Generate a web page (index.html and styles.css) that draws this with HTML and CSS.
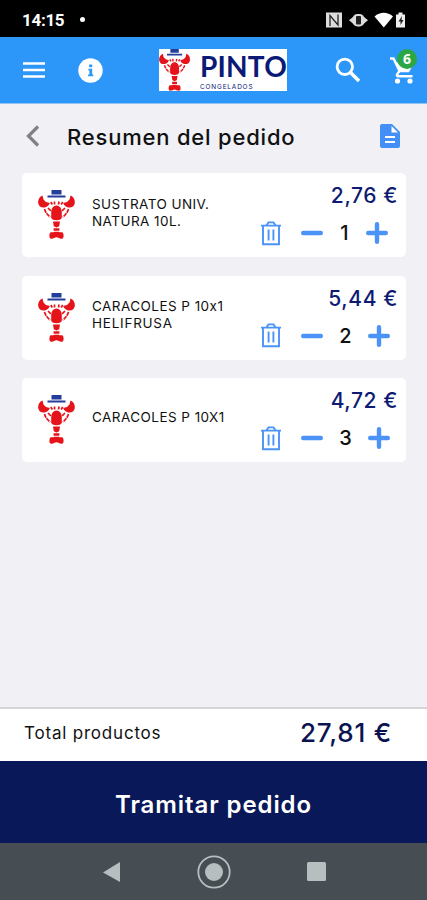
FILE: index.html
```html
<!DOCTYPE html>
<html lang="es">
<head>
    <meta charset="UTF-8">
    <meta name="viewport" content="width=device-width, initial-scale=1.0">
    <title>Resumen del pedido</title>
    <link rel="stylesheet" href="styles.css">
</head>
<body>
    <!-- Shared icons -->
    <svg class="sprite" aria-hidden="true">
        <symbol id="lobster" viewBox="0 0 38 49">
            <path fill="#233d9c" d="M13.5 0h10v4.5h-10zM9.500 5.600h18v2h-18z"/>
            <g fill="#e5141b">
                <path d="M4.500 5.500C1.500 6.500-.2 10 .2 13c.6 3.800 3.500 5 6.600 4.400 2.600-.5 4.400-2.200 5-4.400L8 12 5.500 9.500z"/>
                <path d="M32.500 5.500c3 1 4.700 4.500 4.300 7.500-.6 3.800-3.500 5-6.600 4.400-2.600-.5-4.400-2.200-5-4.400l3.800-1 2.500-2.500z"/>
                <path d="M18.500 15.500c3.200 0 5.300 3 5.300 7v5c0 1.500-2.200 2.800-5.300 2.800s-5.300-1.300-5.300-2.800v-5c0-4 2.100-7 5.300-7z"/>
                <path d="M15 31.500h7l-.8 4.700-2.700 1.300-2.700-1.300zM15.600 38.200h5.800v2.600h-5.800z"/>
                <path d="M12.200 42.500c-1.200 2-1 5.500.3 6 2.500.8 4-1.300 6-1.300s3.500 2.100 6 1.300c1.300-.5 1.500-4 .3-6-2-.8-3.300.3-4.300-.7h-4c-1 1-2.300-.1-4.300.7z"/>
            </g>
            <path fill="none" stroke="#e5141b" stroke-width="1.700" stroke-dasharray="4 .8" d="M6.500 19c1 3.500 3 6 5.800 8M30.500 19c-1 3.500-3 6-5.800 8M10 18l3 3M27 18l-3 3M16.500 11.500v3M21 11.500l-.5 3M12.800 12l1.500 2.500M24.700 12l-1.500 2.500"/>
        </symbol>
        <symbol id="trash" viewBox="0 0 20 25">
            <path fill="none" stroke="currentColor" stroke-width="1.900" d="M0 4.600h20M2 4.600v18.600h16V4.600M5.500 4.300 7.500 1.400h5l2 2.900M7.600 8.500v11M12.400 8.500v11"/>
        </symbol>
        <symbol id="minus" viewBox="0 0 22 22">
            <path fill="none" stroke="currentColor" stroke-width="4.400" stroke-linecap="round" d="M2.200 11h17.600"/>
        </symbol>
        <symbol id="plus" viewBox="0 0 22 22">
            <path fill="none" stroke="currentColor" stroke-width="4.400" stroke-linecap="round" d="M2.200 11h17.600M11 2.200v17.600"/>
        </symbol>
    </svg>

    <div class="status-bar">
        <span class="clock">14:15</span>
        <span class="dot"></span>
        <svg class="status-icons" width="82" height="18" viewBox="0 0 82 18">
            <path fill="#ddd" d="M1 1.500h16v15H1z"/>
            <path fill="none" stroke="#222" stroke-width="1.300" d="M5 15V4.500l8 9.500V3.500"/>
            <rect x="27.500" y="3" width="12" height="12.500" rx="5" fill="#ddd"/>
            <rect x="31" y="5" width="5" height="8.500" rx="1" fill="#222"/>
            <path fill="#ddd" d="M24 9.200 28 6v6.500zM43 9.200 39 6v6.500z"/>
            <path fill="#fff" d="M49.500 5.500c5.500-5 13-5 18.500 0L58.800 16.500z"/>
            <path fill="#eee" d="M71 3.500h2.500V1.500h4v2H80v13h-9z"/>
            <path fill="#222" d="m77 5-3.500 5.500h2V14l3-5h-2z"/>
        </svg>
    </div>

    <header class="app-bar">
        <svg width="22" height="16" viewBox="0 0 22 16">
            <path stroke="#fff" stroke-width="2.400" d="M0 1.500h22M0 8h22M0 14.500h22"/>
        </svg>
        <svg class="info-icon" width="25" height="25" viewBox="0 0 25 25">
            <circle cx="12.500" cy="12.500" r="12.200" fill="#fff"/>
            <path fill="#2c97f8" d="M11.200 6.500h3v2.700h-3zM10.400 10.800h3.800v5.800h1.100v1.700h-5.200v-1.700h1.300v-4.100h-1z"/>
        </svg>
        <div class="logo">
            <svg class="logo-lobster" width="32" height="42" viewBox="0 0 38 49" preserveAspectRatio="none"><use href="#lobster" width="38" height="49"/></svg>
            <div class="logo-text">
                <span class="brand">PINTO</span>
                <span class="sub-brand">CONGELADOS</span>
            </div>
        </div>
        <svg class="search-icon" width="26" height="26" viewBox="0 0 26 26">
            <circle cx="9.800" cy="9.800" r="7.700" fill="none" stroke="#fff" stroke-width="2.800"/>
            <path stroke="#fff" stroke-width="3.600" d="m15.500 15.500 8.500 8.500"/>
        </svg>
        <div class="cart">
            <svg width="25" height="27" viewBox="0 0 25 27">
                <path fill="none" stroke="#fff" stroke-width="2.400" d="M0 1.500h3.500l6 12.500-2.500 3.500c-.4 1 0 1.800 1 1.800h14.500"/>
                <path fill="#fff" d="m5 5 4.500 10.300h9.500L23 8z"/>
                <circle cx="7.500" cy="24" r="2.600" fill="#fff"/>
                <circle cx="20" cy="24" r="2.600" fill="#fff"/>
            </svg>
            <span class="badge">6</span>
        </div>
    </header>

    <main>
        <div class="title-row">
            <svg width="14" height="22" viewBox="0 0 14 22">
                <path fill="none" stroke="#818183" stroke-width="3.200" d="M12 1.500 2.500 11l9.500 9.500"/>
            </svg>
            <h1>Resumen del pedido</h1>
            <svg width="20" height="24" viewBox="0 0 20 24">
                <path fill="#438ff5" d="M2 0h10l8 8v14a2 2 0 0 1-2 2H2a2 2 0 0 1-2-2V2a2 2 0 0 1 2-2z"/>
                <path fill="#fff" d="M11.500 2v6.500H18zM5 12h10v2H5zM5 17h10v2H5z"/>
            </svg>
        </div>

        <div class="card">
            <svg class="product-pic" width="38" height="49"><use href="#lobster"/></svg>
            <p class="name"><span>SUSTRATO UNIV.</span><span>NATURA 10L.</span></p>
            <div class="right">
                <span class="price">2,76 €</span>
                <div class="quantity">
                    <svg width="20" height="25"><use href="#trash"/></svg>
                    <svg width="22" height="22"><use href="#minus"/></svg>
                    <span>1</span>
                    <svg width="22" height="22"><use href="#plus"/></svg>
                </div>
            </div>
        </div>

        <div class="card">
            <svg class="product-pic" width="38" height="49"><use href="#lobster"/></svg>
            <p class="name"><span>CARACOLES P 10x1</span><span class="spaced">HELIFRUSA</span></p>
            <div class="right">
                <span class="price">5,44 €</span>
                <div class="quantity wide">
                    <svg width="20" height="25"><use href="#trash"/></svg>
                    <svg width="22" height="22"><use href="#minus"/></svg>
                    <span>2</span>
                    <svg width="22" height="22"><use href="#plus"/></svg>
                </div>
            </div>
        </div>

        <div class="card">
            <svg class="product-pic" width="38" height="49"><use href="#lobster"/></svg>
            <p class="name"><span>CARACOLES P 10X1</span></p>
            <div class="right">
                <span class="price">4,72 €</span>
                <div class="quantity wide">
                    <svg width="20" height="25"><use href="#trash"/></svg>
                    <svg width="22" height="22"><use href="#minus"/></svg>
                    <span>3</span>
                    <svg width="22" height="22"><use href="#plus"/></svg>
                </div>
            </div>
        </div>
    </main>

    <div class="total">
        <span class="total-label">Total productos</span>
        <span class="total-price">27,81 €</span>
    </div>
    <button class="checkout">Tramitar pedido</button>

    <nav class="system-nav">
        <svg width="18" height="20" viewBox="0 0 18 20"><path fill="#b6bebf" d="M17 0v20L0 10.500z"/></svg>
        <svg width="34" height="34" viewBox="0 0 34 34">
            <circle cx="17" cy="17" r="15.700" fill="none" stroke="#b6bebf" stroke-width="1.800"/>
            <circle cx="17" cy="17" r="9" fill="#b6bebf"/>
        </svg>
        <svg width="19" height="19" viewBox="0 0 19 19"><rect width="19" height="19" rx="1.500" fill="#b6bebf"/></svg>
    </nav>
</body>
</html>
```
FILE: styles.css
```css
* {
    box-sizing: border-box;
}

body {
    display: flex;
    flex-direction: column;
    height: 900px;
    margin: 0;
    background-color: #f0f0f5;
    color: #111;
    font-family: 'Inter', 'Open Sans', sans-serif;
    font-feature-settings: 'calt' 0;
    overflow: hidden;
}

svg {
    display: block;
    flex-shrink: 0;
}

.sprite {
    position: absolute;
    width: 0;
    height: 0;
}

/* Top bars */
.status-bar {
    display: flex;
    align-items: center;
    height: 37px;
    padding: 2px 20px 0 22px;
    background-color: #000;
    color: #fff;
}

.clock {
    width: 58px;
    font: 700 17px 'Roboto', sans-serif;
    letter-spacing: -0.3px;
}

.dot {
    width: 5px;
    height: 5px;
    border-radius: 50%;
    background-color: #fff;
}

.status-icons {
    margin-left: auto;
}

.app-bar {
    display: flex;
    align-items: center;
    height: 67px;
    padding: 0 13px 0 23px;
    background-color: #2c97f8;
    border-bottom: 1px solid #8fc4f6;
}

.info-icon {
    margin-left: 33px;
}

.logo {
    display: flex;
    width: 128px;
    height: 42px;
    margin-left: 56px;
    background-color: #fff;
}

.logo-text {
    display: flex;
    flex-direction: column;
    margin-left: 9px;
    color: #0a1a75;
}

.brand {
    height: 35px;
    font: 700 28px/35px 'Lato', sans-serif;
    letter-spacing: 0.2px;
}

.sub-brand {
    font-size: 6.5px;
    line-height: 6px;
    letter-spacing: 0.8px;
}

.search-icon {
    margin-left: 48px;
}

.cart {
    position: relative;
    margin-left: 29px;
}

.badge {
    position: absolute;
    top: -8px;
    left: 7px;
    width: 20px;
    height: 20px;
    border-radius: 50%;
    background-color: #2ba745;
    color: #fff;
    font: 700 14px/20px 'Open Sans', sans-serif;
    text-align: center;
}

/* Order summary */
main {
    flex: 1;
    padding: 0 21px 0 22px;
}

.title-row {
    display: flex;
    align-items: center;
    height: 69px;
    padding: 0 6px 5px 4px;
}

h1 {
    flex: 1;
    margin: 0 0 0 27px;
    padding-top: 1px;
    font-size: 22px;
    font-weight: 500;
    letter-spacing: 0.8px;
    white-space: nowrap;
}

.card {
    display: flex;
    height: 84px;
    margin-bottom: 18.5px;
    padding-left: 16px;
    border-radius: 5px;
    background-color: #fff;
}

.product-pic {
    margin-top: 17px;
}

.name {
    display: flex;
    flex-direction: column;
    justify-content: center;
    width: 160px;
    margin: 0 0 0 16px;
    padding-bottom: 5px;
    font-size: 13.5px;
    line-height: 17px;
    letter-spacing: 0.45px;
    white-space: nowrap;
}

.name .spaced {
    letter-spacing: 0.75px;
}

.right {
    display: flex;
    flex-direction: column;
    flex: 1;
    padding-right: 8px;
}

.price {
    height: 46px;
    padding-top: 11px;
    color: #0d1b72;
    font-size: 21px;
    font-weight: 500;
    line-height: 24px;
    letter-spacing: 0.6px;
    text-align: right;
    white-space: nowrap;
}

.quantity {
    display: grid;
    grid-template-columns: 40px 22px 43px 22px;
    align-items: center;
    height: 28px;
    margin-left: 9px;
    color: #4b93f7;
}

.quantity.wide {
    grid-template-columns: 40px 22px 45px 22px;
}

.quantity span {
    color: #111;
    font-size: 20px;
    font-weight: 500;
    text-align: center;
}

/* Footer */
.total {
    display: flex;
    align-items: center;
    justify-content: space-between;
    height: 54px;
    padding: 0 35px 5px 24px;
    border-top: 2px solid #d5d5d7;
    background-color: #fff;
}

.total-label {
    font-size: 17px;
    letter-spacing: 0.8px;
}

.total-price {
    color: #0b1450;
    font-size: 26px;
    font-weight: 500;
    letter-spacing: 0.8px;
}

.checkout {
    height: 82px;
    padding: 4px 0 0;
    border: none;
    background-color: #091858;
    color: #fff;
    font: 600 24px 'Inter', sans-serif;
    letter-spacing: 0.9px;
}

.system-nav {
    display: flex;
    align-items: center;
    height: 57px;
    padding-left: 103px;
    gap: 76px;
    background-color: #464e53;
}
```
